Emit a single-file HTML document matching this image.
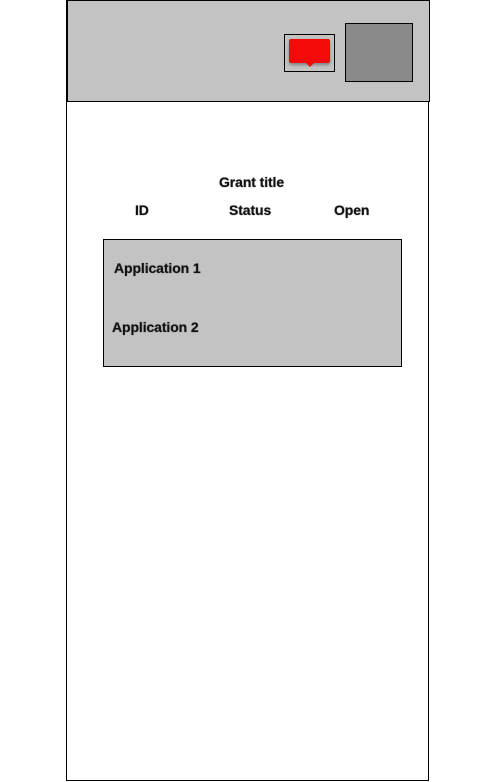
<!DOCTYPE html>
<html><head><style>
body{margin:0;width:495px;height:782px;background:#fff;position:relative;overflow:hidden;font-family:"Liberation Sans",sans-serif;}
.a{position:absolute;box-sizing:border-box}
.t{position:absolute;font-size:14px;font-weight:bold;color:#111;letter-spacing:-0.1px;line-height:16px;white-space:nowrap;text-shadow:0 0 1px #444}
</style></head><body>
<div class="a" style="left:66px;top:0;width:363px;height:781px;border:1px solid #000;border-top:none"></div>
<div class="a" style="left:67px;top:0;width:363px;height:102px;background:#c3c3c3;border:1px solid #000"></div>
<div class="a" style="left:284px;top:34px;width:51px;height:38px;border:1px solid #000;background:#c3c3c3"></div>
<div class="a" style="left:289px;top:39px;width:41px;height:24px;background:#f50a0a;border-radius:2px;box-shadow:0 2px 3px rgba(0,0,0,.35)"></div>
<div class="a" style="left:305px;top:62px;width:0;height:0;border-left:5px solid transparent;border-right:5px solid transparent;border-top:5px solid #f50a0a"></div>
<div class="a" style="left:345px;top:23px;width:68px;height:59px;background:#8a8a8a;border:1px solid #000"></div>
<div class="t" style="left:219px;top:174px">Grant title</div>
<div class="t" style="left:135px;top:202px">ID</div>
<div class="t" style="left:229px;top:202px">Status</div>
<div class="t" style="left:334px;top:202px">Open</div>
<div class="a" style="left:103px;top:239px;width:299px;height:128px;background:#c3c3c3;border:1px solid #000"></div>
<div class="t" style="left:114px;top:260px">Application 1</div>
<div class="t" style="left:112px;top:319px">Application 2</div>
</body></html>
